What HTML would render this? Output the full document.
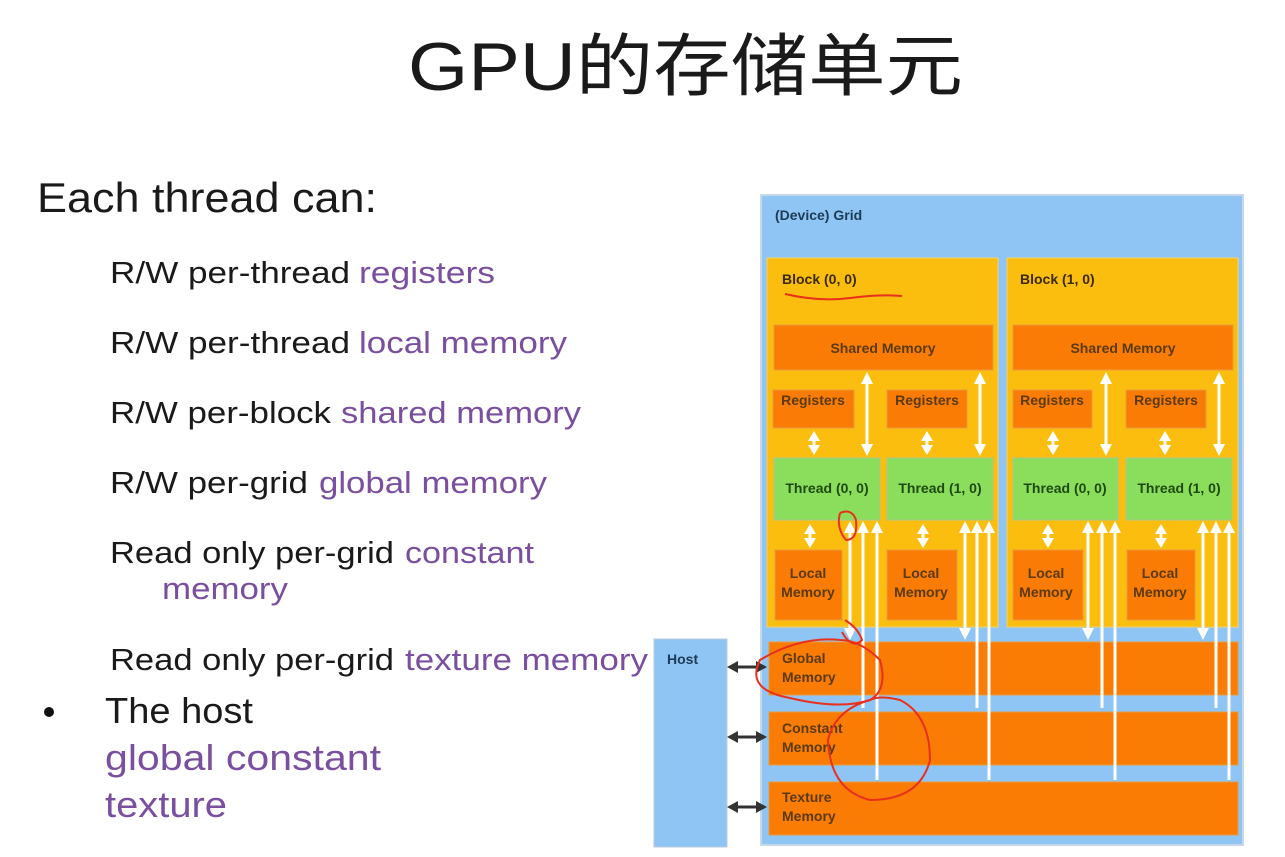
<!DOCTYPE html>
<html><head><meta charset="utf-8"><style>
html,body{margin:0;padding:0;background:#fff;width:1285px;height:857px;overflow:hidden}
svg{display:block}
.t{font-family:"Liberation Sans","Noto Sans CJK SC",sans-serif}
.b{fill:#1a1a1a}.p{fill:#7b4f9f}
.d{font-family:"Liberation Sans",sans-serif;font-weight:bold;fill:#5a3a10;font-size:14px}
</style></head><body>
<svg width="1285" height="857" viewBox="0 0 1285 857" xmlns="http://www.w3.org/2000/svg">
<text class="t b" x="408" y="90" font-size="68" textLength="555" lengthAdjust="spacingAndGlyphs">GPU的存储单元</text>

<text class="t b" x="37" y="212" font-size="42" textLength="340" lengthAdjust="spacingAndGlyphs">Each thread can:</text>
<g font-size="31" class="t">
<text class="b" x="110" y="283" textLength="240" lengthAdjust="spacingAndGlyphs">R/W per-thread</text>
<text class="p" x="359" y="283" textLength="136" lengthAdjust="spacingAndGlyphs">registers</text>
<text class="b" x="110" y="353" textLength="240" lengthAdjust="spacingAndGlyphs">R/W per-thread</text>
<text class="p" x="359" y="353" textLength="208" lengthAdjust="spacingAndGlyphs">local memory</text>
<text class="b" x="110" y="423" textLength="221" lengthAdjust="spacingAndGlyphs">R/W per-block</text>
<text class="p" x="341" y="423" textLength="240" lengthAdjust="spacingAndGlyphs">shared memory</text>
<text class="b" x="110" y="493" textLength="198" lengthAdjust="spacingAndGlyphs">R/W per-grid</text>
<text class="p" x="319" y="493" textLength="228" lengthAdjust="spacingAndGlyphs">global memory</text>
<text class="b" x="110" y="563" textLength="284" lengthAdjust="spacingAndGlyphs">Read only per-grid</text>
<text class="p" x="405" y="563" textLength="129" lengthAdjust="spacingAndGlyphs">constant</text>
<text class="p" x="162" y="599" textLength="126" lengthAdjust="spacingAndGlyphs">memory</text>
<text class="b" x="110" y="670" textLength="284" lengthAdjust="spacingAndGlyphs">Read only per-grid</text>
<text class="p" x="405" y="670" textLength="243" lengthAdjust="spacingAndGlyphs">texture memory</text>
</g>
<circle cx="49" cy="712" r="5" fill="#111"/>
<g font-size="36" class="t">
<text class="b" x="105" y="723" textLength="148" lengthAdjust="spacingAndGlyphs">The host</text>
<text class="p" x="105" y="770" textLength="276" lengthAdjust="spacingAndGlyphs">global  constant</text>
<text class="p" x="105" y="817" textLength="122" lengthAdjust="spacingAndGlyphs">texture</text>
</g>

<rect x="654" y="639" width="73" height="208" fill="#8ec5f5" stroke="#bcd" stroke-width="1"/>
<text class="d" x="667" y="664" style="fill:#1e3b55" font-size="16">Host</text>
<rect x="761" y="195" width="482" height="650" fill="#8ec5f5" stroke="#c8d8e8" stroke-width="2"/>
<text class="d" x="775" y="220" style="fill:#1e3b55" font-size="16">(Device) Grid</text>

<rect x="767" y="258" width="231" height="369" fill="#fbbd0e" stroke="#f4d36a"/>
<rect x="1007" y="258" width="231" height="369" fill="#fbbd0e" stroke="#f4d36a"/>
<text class="d" x="782" y="284" font-size="16" style="fill:#3a2a05">Block (0, 0)</text>
<text class="d" x="1020" y="284" font-size="16" style="fill:#3a2a05">Block (1, 0)</text>
<g fill="#fb7c04" stroke="#e89a40">
<rect x="774" y="325" width="219" height="45"/><rect x="1013" y="325" width="220" height="45"/>
<rect x="773" y="390" width="81" height="38"/><rect x="887" y="390" width="80" height="38"/>
<rect x="1013" y="390" width="79" height="38"/><rect x="1126" y="390" width="80" height="38"/>
<rect x="775" y="550" width="67" height="70"/><rect x="887" y="550" width="70" height="70"/>
<rect x="1013" y="550" width="70" height="70"/><rect x="1127" y="550" width="68" height="70"/>
<rect x="769" y="642" width="469" height="53"/>
<rect x="769" y="712" width="469" height="53"/>
<rect x="769" y="782" width="469" height="53"/>
</g>
<g fill="#8bdd5c" stroke="#a8c890">
<rect x="774" y="458" width="106" height="62"/><rect x="887" y="458" width="106" height="62"/>
<rect x="1013" y="458" width="105" height="62"/><rect x="1126" y="458" width="106" height="62"/>
</g>
<g class="d" text-anchor="middle">
<text x="883" y="353">Shared Memory</text><text x="1123" y="353">Shared Memory</text>
<text x="813" y="405">Registers</text><text x="927" y="405">Registers</text>
<text x="1052" y="405">Registers</text><text x="1166" y="405">Registers</text>
<text x="827" y="493" style="fill:#1d4a10">Thread (0, 0)</text><text x="940" y="493" style="fill:#1d4a10">Thread (1, 0)</text>
<text x="1065" y="493" style="fill:#1d4a10">Thread (0, 0)</text><text x="1179" y="493" style="fill:#1d4a10">Thread (1, 0)</text>
<text x="808" y="578">Local</text><text x="808" y="597">Memory</text>
<text x="921" y="578">Local</text><text x="921" y="597">Memory</text>
<text x="1046" y="578">Local</text><text x="1046" y="597">Memory</text>
<text x="1160" y="578">Local</text><text x="1160" y="597">Memory</text>
</g>
<g class="d">
<text x="782" y="663">Global</text><text x="782" y="682">Memory</text>
<text x="782" y="733">Constant</text><text x="782" y="752">Memory</text>
<text x="782" y="802">Texture</text><text x="782" y="821">Memory</text>
</g>

<!-- white arrows -->
<g stroke="#fff" stroke-width="3" fill="none">
<path d="M867 380V448M980 380V448M1106 380V448M1219 380V448"/>
<path d="M814 438V446M927 438V446M1053 438V446M1165 438V446"/>
<path d="M810 530V540M923 530V540M1048 530V540M1161 530V540"/>
<path d="M850 530V632M965 530V632M1088 530V632M1203 530V632"/>
<path d="M863 530V708M977 530V708M1102 530V708M1216 530V708"/>
<path d="M877 530V780M989 530V780M1115 530V780M1229 530V780"/>
</g>
<g fill="#fff">
<!-- shared<->thread -->
<polygon points="861,384 867,372 873,384"/><polygon points="861,444 867,456 873,444"/>
<polygon points="974,384 980,372 986,384"/><polygon points="974,444 980,456 986,444"/>
<polygon points="1100,384 1106,372 1112,384"/><polygon points="1100,444 1106,456 1112,444"/>
<polygon points="1213,384 1219,372 1225,384"/><polygon points="1213,444 1219,456 1225,444"/>
<!-- reg<->thread -->
<polygon points="808,441 814,431 820,441"/><polygon points="808,445 814,455 820,445"/>
<polygon points="921,441 927,431 933,441"/><polygon points="921,445 927,455 933,445"/>
<polygon points="1047,441 1053,431 1059,441"/><polygon points="1047,445 1053,455 1059,445"/>
<polygon points="1159,441 1165,431 1171,441"/><polygon points="1159,445 1165,455 1171,445"/>
<!-- thread<->local -->
<polygon points="804,534 810,524 816,534"/><polygon points="804,538 810,548 816,538"/>
<polygon points="917,534 923,524 929,534"/><polygon points="917,538 923,548 929,538"/>
<polygon points="1042,534 1048,524 1054,534"/><polygon points="1042,538 1048,548 1054,538"/>
<polygon points="1155,534 1161,524 1167,534"/><polygon points="1155,538 1161,548 1167,538"/>
<!-- up heads on long lines -->
<polygon points="844,533 850,521 856,533"/><polygon points="857,533 863,521 869,533"/><polygon points="871,533 877,521 883,533"/>
<polygon points="959,533 965,521 971,533"/><polygon points="971,533 977,521 983,533"/><polygon points="983,533 989,521 995,533"/>
<polygon points="1082,533 1088,521 1094,533"/><polygon points="1096,533 1102,521 1108,533"/><polygon points="1109,533 1115,521 1121,533"/>
<polygon points="1197,533 1203,521 1209,533"/><polygon points="1210,533 1216,521 1222,533"/><polygon points="1223,533 1229,521 1235,533"/>
<!-- down heads to global -->
<polygon points="844,628 850,640 856,628"/><polygon points="959,628 965,640 971,628"/>
<polygon points="1082,628 1088,640 1094,628"/><polygon points="1197,628 1203,640 1209,628"/>
</g>
<!-- host arrows -->
<g stroke="#333" stroke-width="3"><path d="M736 667H758M736 737H758M736 807H758"/></g>
<g fill="#333">
<polygon points="738,661 727,667 738,673"/><polygon points="756,661 767,667 756,673"/>
<polygon points="738,731 727,737 738,743"/><polygon points="756,731 767,737 756,743"/>
<polygon points="738,801 727,807 738,813"/><polygon points="756,801 767,807 756,813"/>
</g>
<!-- red annotations -->
<g stroke="#e8301c" stroke-width="2" fill="none">
<path d="M785 294 Q820 302 850 298 T902 296"/>
<path d="M840 513 Q852 508 856 520 Q858 540 846 540 Q836 528 840 513"/>
<path d="M845 620 Q858 628 862 640 Q852 650 842 632"/>
<path d="M840 640 Q800 636 760 660 Q745 690 790 698 Q840 710 870 700 Q888 690 880 660 Q860 640 840 640"/>
<path d="M870 700 Q835 710 828 740 Q830 790 870 800 Q920 800 930 760 Q930 715 900 700 Q880 695 870 700"/>
</g>
</svg>
</body></html>
